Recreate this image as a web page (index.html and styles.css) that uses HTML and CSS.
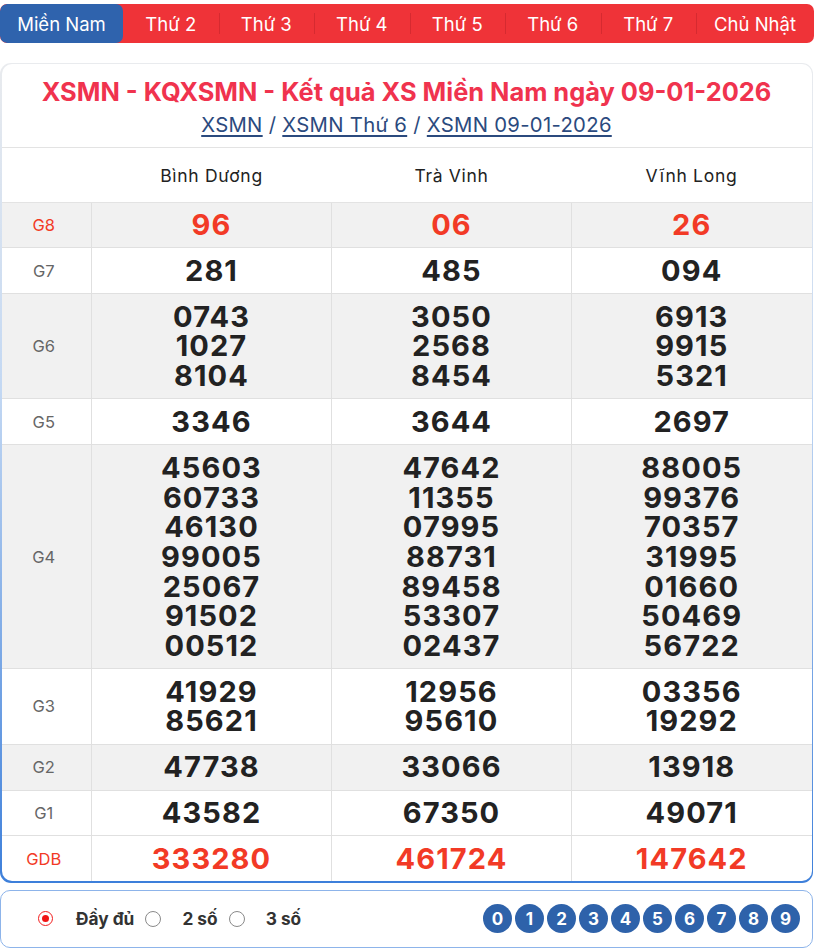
FILE: index.html
```html
<!DOCTYPE html>
<html lang="vi">
<head>
<meta charset="utf-8">
<title>XSMN</title>
<link rel="stylesheet" href="styles.css">
</head>
<body>
<div class="page">
  <nav class="tabs">
    <a class="tab active">Miền Nam</a>
    <a class="tab">Thứ 2</a>
    <a class="tab">Thứ 3</a>
    <a class="tab">Thứ 4</a>
    <a class="tab">Thứ 5</a>
    <a class="tab">Thứ 6</a>
    <a class="tab">Thứ 7</a>
    <a class="tab last">Chủ Nhật</a>
  </nav>

  <div class="card-frame">
    <div class="card">
      <div class="card-head">
        <h1 class="title">XSMN - KQXSMN - Kết quả XS Miền Nam ngày 09-01-2026</h1>
        <div class="crumbs"><a>XSMN</a> / <a>XSMN Thứ 6</a> / <a>XSMN 09-01-2026</a></div>
      </div>
      <table class="results">
        <colgroup><col class="c-label"><col class="c-prov"><col class="c-prov"><col class="c-prov"></colgroup>
        <thead>
          <tr class="head"><th></th><th>Bình Dương</th><th>Trà Vinh</th><th>Vĩnh Long</th></tr>
        </thead>
        <tbody>
          <tr class="gray"><td class="lbl red">G8</td><td class="num red">96</td><td class="num red">06</td><td class="num red">26</td></tr>
          <tr><td class="lbl">G7</td><td class="num">281</td><td class="num">485</td><td class="num">094</td></tr>
          <tr class="gray"><td class="lbl">G6</td><td class="num">0743<br>1027<br>8104</td><td class="num">3050<br>2568<br>8454</td><td class="num">6913<br>9915<br>5321</td></tr>
          <tr><td class="lbl">G5</td><td class="num">3346</td><td class="num">3644</td><td class="num">2697</td></tr>
          <tr class="gray"><td class="lbl">G4</td><td class="num">45603<br>60733<br>46130<br>99005<br>25067<br>91502<br>00512</td><td class="num">47642<br>11355<br>07995<br>88731<br>89458<br>53307<br>02437</td><td class="num">88005<br>99376<br>70357<br>31995<br>01660<br>50469<br>56722</td></tr>
          <tr><td class="lbl">G3</td><td class="num">41929<br>85621</td><td class="num">12956<br>95610</td><td class="num">03356<br>19292</td></tr>
          <tr class="gray"><td class="lbl">G2</td><td class="num">47738</td><td class="num">33066</td><td class="num">13918</td></tr>
          <tr><td class="lbl">G1</td><td class="num">43582</td><td class="num">67350</td><td class="num">49071</td></tr>
          <tr class="last-row"><td class="lbl red">GDB</td><td class="num red">333280</td><td class="num red">461724</td><td class="num red">147642</td></tr>
        </tbody>
      </table>
    </div>
  </div>

  <div class="filter">
    <div class="opts">
      <span class="radio checked"></span><span class="opt-label first">Đầy đủ</span>
      <span class="radio"></span><span class="opt-label">2 số</span>
      <span class="radio"></span><span class="opt-label">3 số</span>
    </div>
    <div class="digits">
      <span class="dg">0</span><span class="dg">1</span><span class="dg">2</span><span class="dg">3</span><span class="dg">4</span><span class="dg">5</span><span class="dg">6</span><span class="dg">7</span><span class="dg">8</span><span class="dg">9</span>
    </div>
  </div>
</div>
</body>
</html>
```

FILE: styles.css
```css
* { box-sizing: border-box; }
html, body { margin: 0; padding: 0; background: #fff; }
body { font-family: Inter, "Liberation Sans", Arial, sans-serif; color: #222; }

.page {
  width: 814px;
  padding-top: 4px;
}

/* tabs */
.tabs {
  display: grid;
  grid-template-columns: 123px repeat(6, 95.5px) 1fr;
  height: 39px;
  background: #ef3338;
  border-radius: 7px;
  overflow: hidden;
}
.tab {
  display: flex;
  align-items: center;
  justify-content: center;
  color: #fff;
  font-size: 18.5px;
  position: relative;
}
.tab + .tab:not(:nth-child(2))::before {
  content: "";
  position: absolute;
  left: 0;
  top: 9px;
  bottom: 9px;
  width: 1px;
  background: #d62a30;
}
.tab.active {
  background: #2f63ad;
  border-radius: 7px;
}

/* card */
.card-frame {
  margin-top: 20px;
  width: 813px;
  padding: 1px 1.5px 1.5px 1.5px;
  border-radius: 11px;
  background: linear-gradient(180deg, #e9ebee 0%, #c3d8f3 40%, #3d7fda 100%);
}
.card {
  background: #fff;
  border-radius: 10px;
  overflow: hidden;
}
.card-head {
  text-align: center;
  padding: 11px 0 9px;
  border-bottom: 1px solid #e3e3e3;
}
.title {
  margin: 0;
  font-size: 25.4px;
  font-weight: bold;
  color: #f0334e;
  line-height: 34px;
}
.crumbs {
  margin-top: 3px;
  font-size: 20.3px;
  line-height: 26px;
  color: #2b4a7e;
  letter-spacing: 0.3px;
}
.crumbs a {
  color: #2b4a7e;
  text-decoration: underline;
  text-underline-offset: 3px;
  text-decoration-thickness: 1.5px;
}

/* table */
.results {
  width: 100%;
  border-collapse: collapse;
  table-layout: fixed;
}
.c-label { width: 90px; }
.results th {
  height: 54px;
  padding-top: 3px;
  font-size: 17.5px;
  font-weight: normal;
  color: #222;
  letter-spacing: 0.7px;
  border-bottom: 1px solid #e3e3e3;
  text-align: center;
  vertical-align: middle;
}
.results td {
  border: 1px solid #e0e0e0;
  text-align: center;
  vertical-align: middle;
}
.results tr td:first-child { border-left: 0; }
.results tr td:last-child { border-right: 0; }
.results tr.last-row td { border-bottom: 0; }
.results tr.gray td { background: #f1f1f1; }
.lbl {
  font-size: 16.5px;
  color: #666;
  padding-right: 6px;
}
.num {
  padding: 7.6px 0;
  font-size: 29px;
  line-height: 29.67px;
  font-weight: bold;
  letter-spacing: 1.1px;
  color: #222;
}
.red { color: #f23a26 !important; }

/* filter */
.filter {
  margin-top: 7px;
  width: 813px;
  height: 58px;
  border: 1.5px solid #8db4ea;
  border-radius: 10px;
  display: flex;
  align-items: center;
  justify-content: space-between;
  padding: 0 12px 0 37px;
}
.opts {
  display: flex;
  align-items: center;
}
.radio {
  width: 16px;
  height: 16px;
  border-radius: 50%;
  border: 1.3px solid #8a8a8a;
  background: #fff;
  display: inline-block;
}
.radio.checked {
  border: 1.5px solid #f21d1d;
  position: relative;
  width: 15px;
  height: 15px;
}
.radio.checked::after {
  content: "";
  position: absolute;
  left: 2.5px;
  top: 2.5px;
  width: 7px;
  height: 7px;
  border-radius: 50%;
  background: #f01414;
}
.opt-label {
  font-size: 17.3px;
  font-weight: bold;
  color: #333;
  margin: 0 11px 0 21px;
}
.opt-label.first { margin-left: 23px; }
.digits {
  display: flex;
  gap: 3px;
}
.dg {
  width: 29px;
  height: 29px;
  border-radius: 50%;
  background: #2e62aa;
  color: #fff;
  font-weight: bold;
  font-size: 17px;
  display: flex;
  align-items: center;
  justify-content: center;
}
```
